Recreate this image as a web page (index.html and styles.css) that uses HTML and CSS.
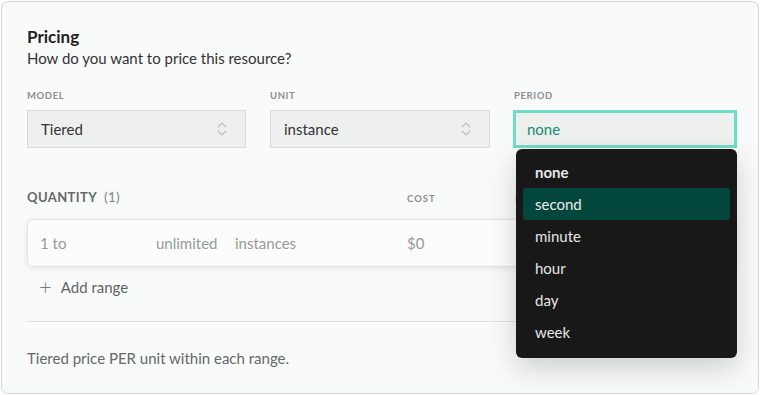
FILE: index.html
```html
<!DOCTYPE html>
<html>
<head>
<meta charset="utf-8">
<link rel="stylesheet" href="styles.css">
</head>
<body>
<div class="card">
  <h2 class="title">Pricing</h2>
  <p class="subtitle">How do you want to price this resource?</p>
  <div class="fields">
    <div class="field">
      <div class="label">Model</div>
      <div class="select">
        <span>Tiered</span>
        <svg class="chev" width="10" height="16" viewBox="0 0 10 16"><path d="M1 6 L5 2 L9 6 M1 10 L5 14 L9 10" fill="none" stroke="#b9bebd" stroke-width="1.2"/></svg>
      </div>
    </div>
    <div class="field">
      <div class="label">Unit</div>
      <div class="select">
        <span>instance</span>
        <svg class="chev" width="10" height="16" viewBox="0 0 10 16"><path d="M1 6 L5 2 L9 6 M1 10 L5 14 L9 10" fill="none" stroke="#b9bebd" stroke-width="1.2"/></svg>
      </div>
    </div>
    <div class="field">
      <div class="label">Period</div>
      <div class="select focused">
        <span>none</span>
      </div>
      <ul class="menu">
        <li class="sel">none</li>
        <li class="hover">second</li>
        <li>minute</li>
        <li>hour</li>
        <li>day</li>
        <li>week</li>
      </ul>
    </div>
  </div>
  <div class="qhead">
    <div class="qlabel">Quantity <span class="count">(1)</span></div>
    <div class="clabel">Cost</div>
    <div class="clabel">Flat</div>
  </div>
  <div class="row">
    <span class="c1">1 to</span>
    <span class="c2">unlimited</span>
    <span class="c3">instances</span>
    <span class="c4">$0</span>
    <span class="c5">$0</span>
  </div>
  <div class="add"><span class="plus">+</span>Add range</div>
  <hr class="divider">
  <p class="foot">Tiered price PER unit within each range.</p>
</div>
</body>
</html>
```
FILE: styles.css
```css
* { box-sizing: border-box; }
html, body { margin: 0; padding: 0; background: #ffffff; }
body { padding: 1px 1px 0 1px; font-family: "Lato", "Liberation Sans", sans-serif; color: #333; }
.card {
  width: 758px;
  height: 393px;
  border: 1px solid #d3d5d5;
  border-radius: 7px;
  background: #f9fbfb;
  padding: 24px 23px 0 25px;
  overflow: hidden;
}
.title { margin: 0; font-size: 17px; font-weight: 700; color: #222; line-height: 22px; }
.subtitle { margin: 0; font-size: 15px; line-height: 20px; color: #333; }
.fields { display: grid; grid-template-columns: 219px 220px 223px; column-gap: 24px; margin-top: 22px; }
.field { position: relative; }
.label { font-size: 9.5px; font-weight: 700; letter-spacing: 0.6px; text-transform: uppercase; color: #8c8f8f; line-height: 12px; margin-bottom: 8px; }
.select {
  height: 38px;
  background: #edf0ef;
  border: 1px solid #d7dbda;
  display: flex; align-items: center; justify-content: space-between;
  padding: 0 18px 0 13px;
  font-size: 15px; color: #333;
}
.select.focused { border: 3px solid #6fdcc6; padding-left: 11px; color: #1c8a74; margin-left: -1px; }
.chev { display: block; }
.menu {
  position: absolute; left: 2px; top: 59px; width: 221px;
  margin: 0; padding: 7px 7px 10px; list-style: none;
  background: #181818; border-radius: 6px;
  box-shadow: 0 10px 30px rgba(0,0,0,0.18);
  z-index: 5;
}
.menu li { height: 32px; line-height: 32px; padding-left: 12px; font-size: 15px; color: #e6e6e6; border-radius: 3px; }
.menu li.sel { font-weight: 700; }
.menu li.hover { background: #03463c; color: #eaeaea; }
.qhead { display: flex; align-items: baseline; margin-top: 40px; }
.qlabel { width: 380px; font-size: 13px; font-weight: 700; color: #646868; text-transform: uppercase; letter-spacing: 0.4px; }
.count { text-transform: none; font-weight: 400; color: #888; letter-spacing: 0; margin-left: 4px; font-size: 14px; }
.clabel { width: 108px; font-size: 9.5px; font-weight: 700; letter-spacing: 1px; text-transform: uppercase; color: #8c8f8f; }
.row {
  margin-top: 14px; height: 48px; width: 709px;
  background: #fbfcfc; border: 1px solid #e2e4e4; border-radius: 6px;
  box-shadow: 0 2px 6px rgba(0,0,0,0.08);
  display: flex; align-items: center; padding-left: 12px;
  font-size: 15px; color: #979a9a;
}
.c1 { width: 116px; }
.c2 { width: 79px; }
.c3 { width: 172px; }
.c4 { width: 108px; }
.add { display: flex; align-items: center; margin-top: 10px; margin-left: 12px; font-size: 15px; color: #5f6363; height: 20px; }
.plus { font-size: 22px; font-weight: 300; margin-right: 9px; color: #777; line-height: 20px; }
.divider { border: 0; border-top: 1px solid #dfe1e1; margin: 24px 0 0; width: 709px; }
.foot { margin: 27px 0 0; font-size: 15px; color: #656969; }
```
